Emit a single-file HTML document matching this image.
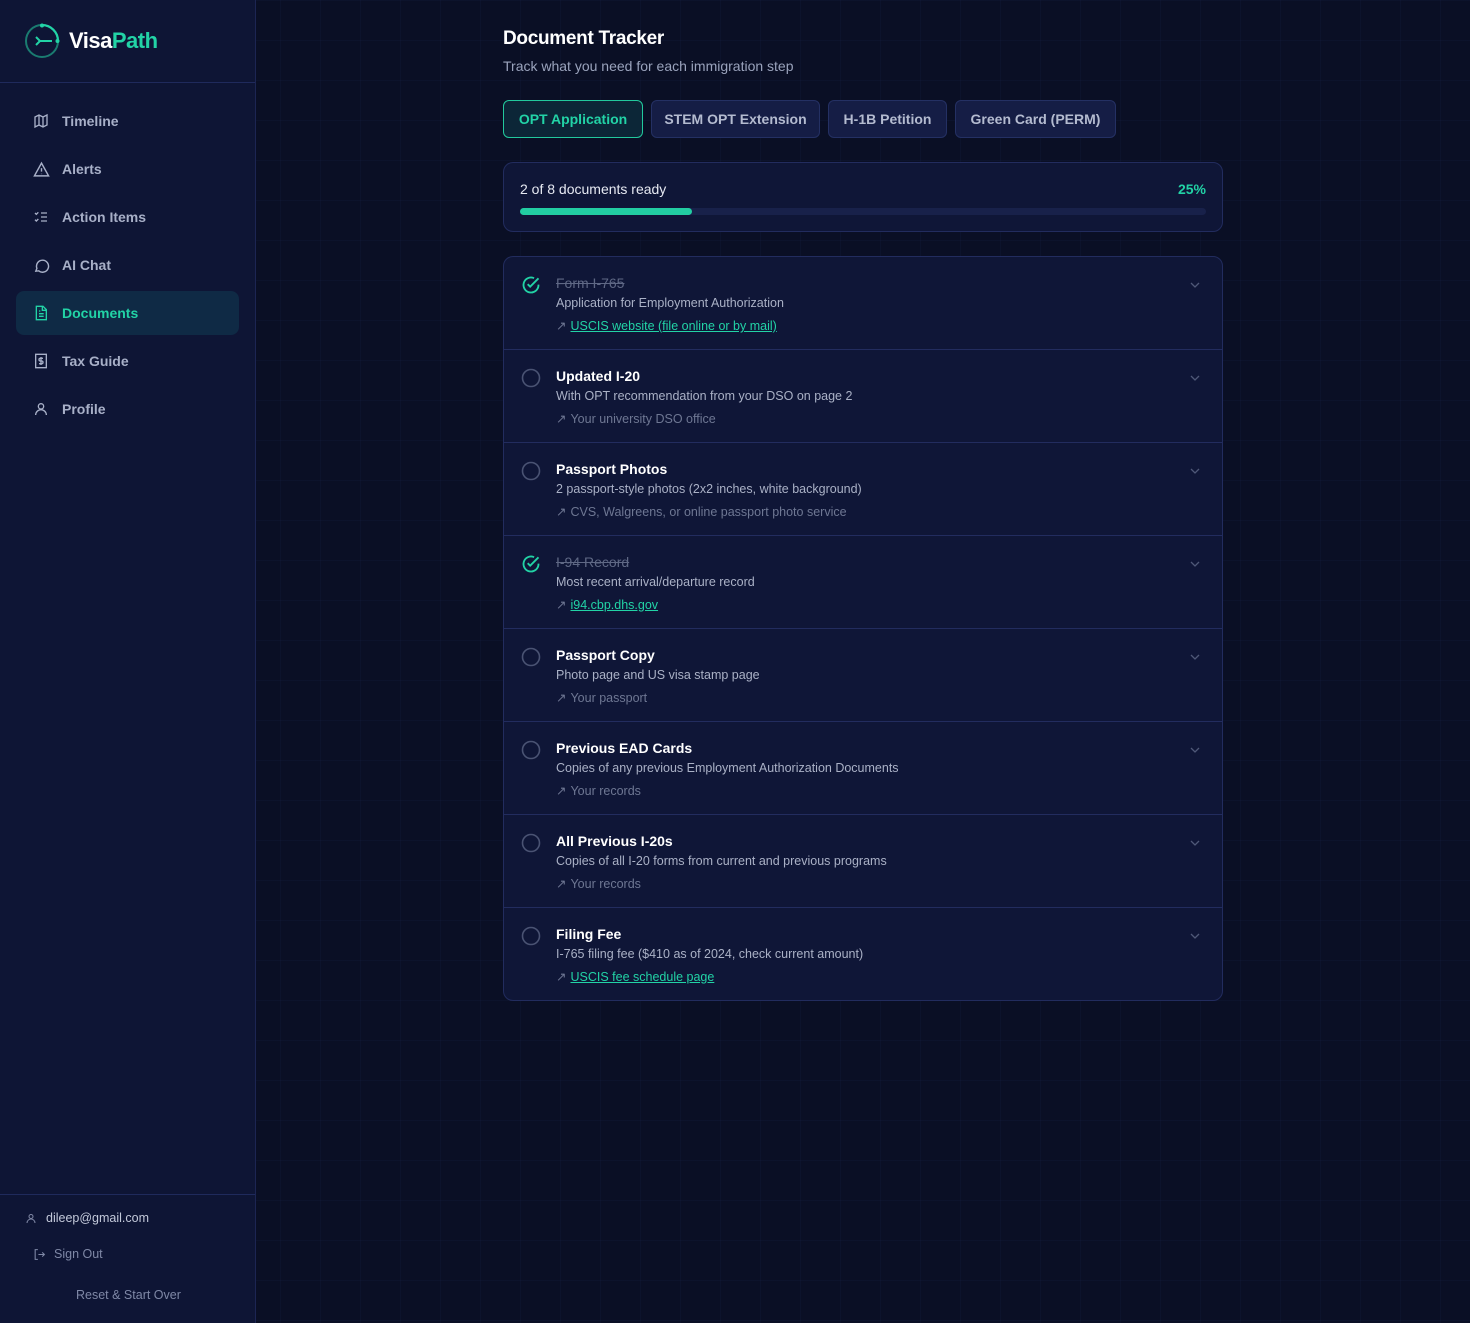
<!DOCTYPE html>
<html><head><meta charset="utf-8"><style>
*{box-sizing:border-box;margin:0;padding:0}
body{width:1470px;height:1323px;background:#0a0f25;font-family:"Liberation Sans",sans-serif;color:#e6e9f2;position:relative;overflow:hidden;
background-image:linear-gradient(rgba(40,55,110,.09) 1px,transparent 1px),linear-gradient(90deg,rgba(40,55,110,.09) 1px,transparent 1px);background-size:40px 40px;}
.side{position:absolute;left:0;top:0;width:256px;height:1323px;background:#0e1535;border-right:1px solid #1c2553}
.logo{height:83px;border-bottom:1px solid #1f2a5c;display:flex;align-items:center;padding-left:23px}
.logo span{font-weight:bold;font-size:22px;margin-left:8px;letter-spacing:-0.5px}
.nav{position:absolute;left:16px;width:223px;height:44px;display:flex;align-items:center;padding-left:16px;font-size:14px;color:#a8b0c8;font-weight:bold;border-radius:8px}
.nav .ic{width:18px;height:18px;display:flex;align-items:center;justify-content:center;margin-right:12px}
.nav.act{background:#0f2a45;color:#22d3a6}
.bot{position:absolute;left:0;top:1194px;width:255px;border-top:1px solid #1f2a5c}
.main{position:absolute;left:503px;top:0}
h1{position:absolute;top:28px;font-size:19px;font-weight:bold;color:#fff;white-space:nowrap;letter-spacing:-0.3px}
.sub{position:absolute;top:58px;font-size:14px;color:#9aa3bc;white-space:nowrap}
.tab{position:absolute;top:100px;height:38px;border-radius:6px;background:#151d45;border:1px solid #243063;color:#b4bbd0;font-size:14px;font-weight:bold;display:flex;align-items:center;justify-content:center}
.tab.act{background:#0c2637;border-color:#22c99d;color:#22d3a6}
.prog{position:absolute;left:503px;top:162px;width:720px;height:70px;border:1px solid #222c5e;border-radius:10px;background:#0f1637}
.list{position:absolute;left:503px;top:256px;width:720px;height:745px;border:1px solid #222c5e;border-radius:10px;background:#0f1637;overflow:hidden}
.it{height:93px;border-bottom:1px solid #222c5e;position:relative}
.it:last-child{border-bottom:none}
.it .c{position:absolute;left:17px;top:18px}
.it .t{position:absolute;left:52px;top:18px;font-size:14px;font-weight:bold;color:#fff}
.it .t.done{color:#5f6885;text-decoration:line-through;font-weight:normal}
.it .d{position:absolute;left:52px;top:39px;font-size:12.5px;color:#aab1c6}
.it .s{position:absolute;left:52px;top:61px;font-size:12.5px;color:#6e7793}
.it .s a{color:#22d3a6;text-decoration:underline;margin-left:4px}
.it .s i{font-style:normal;margin-left:4px}
.it .ch{position:absolute;right:22px;top:24px}
</style></head><body>
<div class="side">
 <div class="logo">
  <svg width="38" height="38" viewBox="0 0 38 38"><circle cx="19" cy="19" r="16" fill="none" stroke="#1a7b70" stroke-width="2"/><path d="M19 3 A16 16 0 0 1 35 19" fill="none" stroke="#22d3a6" stroke-width="2.2"/><circle cx="19" cy="3.5" r="2" fill="#22d3a6"/><circle cx="34.5" cy="19" r="2" fill="#22d3a6"/><path d="M13 15l4 4-4 4M17 19h12" fill="none" stroke="#22d3a6" stroke-width="2"/></svg>
  <span style="color:#fff">Visa<b style="color:#22d3a6">Path</b></span>
 </div>
 <div class="nav" style="top:99px"><span class="ic"><svg width="16" height="16" viewBox="0 0 24 24" fill="none" stroke="#a8b0c8" stroke-width="2"><path d="M3 6l6-3 6 3 6-3v15l-6 3-6-3-6 3z M9 3v15 M15 6v15"/></svg></span>Timeline</div>
 <div class="nav" style="top:147px"><span class="ic"><svg width="17" height="17" viewBox="0 0 24 24" fill="none" stroke="#a8b0c8" stroke-width="2"><path d="M12 3L2 21h20z M12 10v5 M12 18v.5"/></svg></span>Alerts</div>
 <div class="nav" style="top:195px"><span class="ic"><svg width="16" height="16" viewBox="0 0 24 24" fill="none" stroke="#a8b0c8" stroke-width="2"><path d="M3 6l2 2 3-3 M3 16l2 2 3-3 M12 6h9 M12 12h9 M12 18h9"/></svg></span>Action Items</div>
 <div class="nav" style="top:243px"><span class="ic"><svg width="17" height="17" viewBox="0 0 24 24" fill="none" stroke="#a8b0c8" stroke-width="2"><path d="M4 20l1.5-4A8.5 8.5 0 1 1 8 19.5z"/></svg></span>AI Chat</div>
 <div class="nav act" style="top:291px"><span class="ic"><svg width="16" height="16" viewBox="0 0 24 24" fill="none" stroke="#22d3a6" stroke-width="2"><path d="M5 2h10l5 5v15H5z M14 2v6h6 M9 13h7 M9 17h7 M9 9h2"/></svg></span>Documents</div>
 <div class="nav" style="top:339px"><span class="ic"><svg width="16" height="16" viewBox="0 0 24 24" fill="none" stroke="#a8b0c8" stroke-width="2"><path d="M4 2h16v20H4z M15 8h-4a2 2 0 0 0 0 4h2a2 2 0 0 1 0 4H9 M12 6v12"/></svg></span>Tax Guide</div>
 <div class="nav" style="top:387px"><span class="ic"><svg width="16" height="16" viewBox="0 0 24 24" fill="none" stroke="#a8b0c8" stroke-width="2"><circle cx="12" cy="8" r="4"/><path d="M4 21a8 8 0 0 1 16 0"/></svg></span>Profile</div>
 <div class="bot">
  <div style="position:absolute;left:25px;top:16px;font-size:12.5px;color:#c3c9da;display:flex;align-items:center"><svg width="12" height="13" viewBox="0 0 24 24" fill="none" stroke="#8088a6" stroke-width="2"><circle cx="12" cy="8" r="4"/><path d="M4 21a8 8 0 0 1 16 0"/></svg><span style="margin-left:9px">dileep@gmail.com</span></div>
  <div style="position:absolute;left:33px;top:52px;font-size:12.5px;color:#7f88a6;display:flex;align-items:center"><svg width="13" height="13" viewBox="0 0 24 24" fill="none" stroke="#7f88a6" stroke-width="2"><path d="M9 3H4v18h5 M10 12h11 M17 8l4 4-4 4"/></svg><span style="margin-left:8px">Sign Out</span></div>
  <div style="position:absolute;left:76px;top:93px;font-size:12.5px;color:#7f88a6">Reset &amp; Start Over</div>
 </div>
</div>
<div class="main">
 <h1>Document Tracker</h1>
 <div class="sub">Track what you need for each immigration step</div>
</div>
<div class="tab act" style="left:503px;width:140px">OPT Application</div>
<div class="tab" style="left:651px;width:169px">STEM OPT Extension</div>
<div class="tab" style="left:828px;width:119px">H-1B Petition</div>
<div class="tab" style="left:955px;width:161px">Green Card (PERM)</div>
<div class="prog">
 <div style="position:absolute;left:16px;top:18px;font-size:14px;color:#e6e9f2">2 of 8 documents ready</div>
 <div style="position:absolute;right:16px;top:18px;font-size:14px;font-weight:bold;color:#22d3a6">25%</div>
 <div style="position:absolute;left:16px;top:45px;width:686px;height:7px;border-radius:4px;background:#18214a"><div style="width:172px;height:7px;border-radius:4px;background:#22cda2"></div></div>
</div>
<div class="list">
 <div class="it"><svg class="c" width="20" height="20" viewBox="0 0 24 24" fill="none" stroke="#22d3a6" stroke-width="2.2"><path d="M21 11.5V12a9 9 0 1 1-5.3-8.2"/><path d="M8 11l3 3 10-10"/></svg><div class="t done">Form I-765</div><div class="d">Application for Employment Authorization</div><div class="s">↗<a>USCIS website (file online or by mail)</a></div><svg class="ch" width="10" height="8" viewBox="0 0 10 8"><path d="M1 2l4 4 4-4" fill="none" stroke="#4f5878" stroke-width="1.3"/></svg></div>
 <div class="it"><svg class="c" width="20" height="20" viewBox="0 0 20 20"><circle cx="10" cy="10" r="8.5" fill="none" stroke="#4a5373" stroke-width="1.6"/></svg><div class="t">Updated I-20</div><div class="d">With OPT recommendation from your DSO on page 2</div><div class="s">↗<i>Your university DSO office</i></div><svg class="ch" width="10" height="8" viewBox="0 0 10 8"><path d="M1 2l4 4 4-4" fill="none" stroke="#4f5878" stroke-width="1.3"/></svg></div>
 <div class="it"><svg class="c" width="20" height="20" viewBox="0 0 20 20"><circle cx="10" cy="10" r="8.5" fill="none" stroke="#4a5373" stroke-width="1.6"/></svg><div class="t">Passport Photos</div><div class="d">2 passport-style photos (2x2 inches, white background)</div><div class="s">↗<i>CVS, Walgreens, or online passport photo service</i></div><svg class="ch" width="10" height="8" viewBox="0 0 10 8"><path d="M1 2l4 4 4-4" fill="none" stroke="#4f5878" stroke-width="1.3"/></svg></div>
 <div class="it"><svg class="c" width="20" height="20" viewBox="0 0 24 24" fill="none" stroke="#22d3a6" stroke-width="2.2"><path d="M21 11.5V12a9 9 0 1 1-5.3-8.2"/><path d="M8 11l3 3 10-10"/></svg><div class="t done">I-94 Record</div><div class="d">Most recent arrival/departure record</div><div class="s">↗<a>i94.cbp.dhs.gov</a></div><svg class="ch" width="10" height="8" viewBox="0 0 10 8"><path d="M1 2l4 4 4-4" fill="none" stroke="#4f5878" stroke-width="1.3"/></svg></div>
 <div class="it"><svg class="c" width="20" height="20" viewBox="0 0 20 20"><circle cx="10" cy="10" r="8.5" fill="none" stroke="#4a5373" stroke-width="1.6"/></svg><div class="t">Passport Copy</div><div class="d">Photo page and US visa stamp page</div><div class="s">↗<i>Your passport</i></div><svg class="ch" width="10" height="8" viewBox="0 0 10 8"><path d="M1 2l4 4 4-4" fill="none" stroke="#4f5878" stroke-width="1.3"/></svg></div>
 <div class="it"><svg class="c" width="20" height="20" viewBox="0 0 20 20"><circle cx="10" cy="10" r="8.5" fill="none" stroke="#4a5373" stroke-width="1.6"/></svg><div class="t">Previous EAD Cards</div><div class="d">Copies of any previous Employment Authorization Documents</div><div class="s">↗<i>Your records</i></div><svg class="ch" width="10" height="8" viewBox="0 0 10 8"><path d="M1 2l4 4 4-4" fill="none" stroke="#4f5878" stroke-width="1.3"/></svg></div>
 <div class="it"><svg class="c" width="20" height="20" viewBox="0 0 20 20"><circle cx="10" cy="10" r="8.5" fill="none" stroke="#4a5373" stroke-width="1.6"/></svg><div class="t">All Previous I-20s</div><div class="d">Copies of all I-20 forms from current and previous programs</div><div class="s">↗<i>Your records</i></div><svg class="ch" width="10" height="8" viewBox="0 0 10 8"><path d="M1 2l4 4 4-4" fill="none" stroke="#4f5878" stroke-width="1.3"/></svg></div>
 <div class="it"><svg class="c" width="20" height="20" viewBox="0 0 20 20"><circle cx="10" cy="10" r="8.5" fill="none" stroke="#4a5373" stroke-width="1.6"/></svg><div class="t">Filing Fee</div><div class="d">I-765 filing fee ($410 as of 2024, check current amount)</div><div class="s">↗<a>USCIS fee schedule page</a></div><svg class="ch" width="10" height="8" viewBox="0 0 10 8"><path d="M1 2l4 4 4-4" fill="none" stroke="#4f5878" stroke-width="1.3"/></svg></div>
</div>
</body></html>
